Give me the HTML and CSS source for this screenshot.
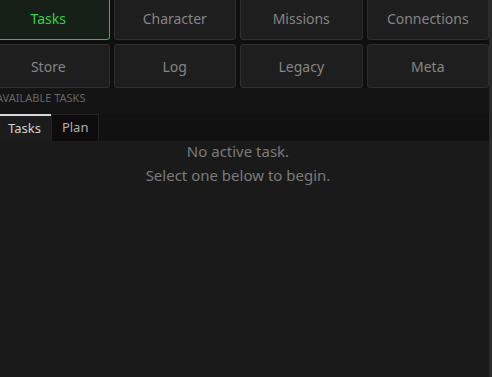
FILE: index.html
```html
<!DOCTYPE html>
<html lang="en">
<head>
    <meta charset="UTF-8">
    <meta name="viewport" content="width=device-width, initial-scale=1.0">
    <title>Tasks</title>
    <link rel="stylesheet" href="styles.css">
</head>
<body>
    <div class="app">
        <div class="main">
            <!-- top navigation -->
            <div class="nav-grid">
                <button class="nav-btn active">Tasks</button>
                <button class="nav-btn">Character</button>
                <button class="nav-btn">Missions</button>
                <button class="nav-btn">Connections</button>
                <button class="nav-btn">Store</button>
                <button class="nav-btn">Log</button>
                <button class="nav-btn">Legacy</button>
                <button class="nav-btn">Meta</button>
            </div>

            <div class="section-label">Available Tasks</div>

            <div class="tab-bar">
                <div class="tab active">Tasks</div>
                <div class="tab">Plan</div>
            </div>

            <div class="content">
                <div class="empty-msg">
                    <p>No active task.</p>
                    <p>Select one below to begin.</p>
                </div>
            </div>
        </div>
        <div class="scroll-strip"></div>
    </div>
</body>
</html>
```

FILE: styles.css
```css
* {
    margin: 0;
    padding: 0;
    box-sizing: border-box;
}

body {
    font-family: "Noto Sans", "Open Sans", sans-serif;
    background-color: #1a1a1a;
    width: 492px;
    height: 377px;
    overflow: hidden;
}

.app {
    display: flex;
    height: 100%;
}

.main {
    flex: 1;
    margin-left: -13px;
    display: flex;
    flex-direction: column;
}

.scroll-strip {
    width: 3px;
    background-color: #2a2a2a;
}

.nav-grid {
    display: grid;
    grid-template-columns: repeat(4, 1fr);
    gap: 4px;
    margin-top: -4px;
    background-color: #0f0f0f;
}

.nav-btn {
    height: 44px;
    background-color: #1e1e1e;
    border: 1px solid #2e2e2e;
    border-radius: 3px;
    color: #858585;
    font-family: inherit;
    font-size: 14px;
}

.nav-btn.active {
    background-color: #172017;
    border-color: #2fbf3f;
    color: #35d04a;
}

.section-label {
    background-color: #141414;
    color: #666;
    font-size: 11px;
    text-transform: uppercase;
    padding: 2px 9px 0;
    height: 26px;
    line-height: 16px;
}

.tab-bar {
    display: flex;
    background-color: #111;
    padding-left: 11px;
    height: 27px;
}

.tab {
    padding: 0 10px;
    font-size: 13px;
    line-height: 25px;
    color: #b0b0b0;
    background-color: #0c0c0c;
    border: 1px solid #222;
    border-bottom: none;
}

.tab.active {
    background-color: #1c1c1c;
    color: #d0d0d0;
    border: none;
    border-top: 2px solid #d8d8d8;
}

.content {
    flex: 1;
    background-color: #1a1a1a;
    text-align: center;
    color: #7a7a7a;
    font-size: 15px;
    line-height: 24px;
}

.empty-msg {
    margin-top: -2px;
}
```
